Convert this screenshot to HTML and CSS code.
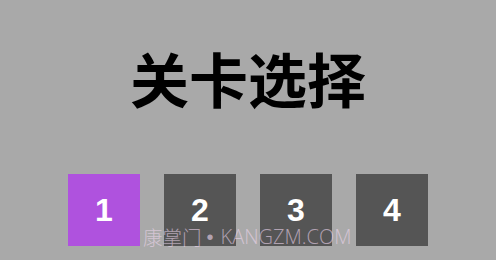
FILE: index.html
```html
<!DOCTYPE html>
<html lang="zh">
<head>
<meta charset="utf-8">
<link rel="stylesheet" href="styles.css">
</head>
<body>
<main class="screen">
  <h1 class="title">关卡选择</h1>
  <div class="levels">
    <div class="level active">1</div>
    <div class="level">2</div>
    <div class="level">3</div>
    <div class="level">4</div>
  </div>
  <div class="watermark"><span class="wm-cjk">康掌门</span><span class="wm-sep">•</span><span class="wm-latin">KANGZM.COM</span></div>
</main>
</body>
</html>
```
FILE: styles.css
```css
html, body {
  margin: 0;
  padding: 0;
}
body {
  background: #a9a9a9;
  width: 496px;
  height: 260px;
  overflow: hidden;
}
.screen {
  position: relative;
  width: 496px;
  height: 260px;
  display: flex;
  flex-direction: column;
  align-items: center;
}
.title {
  margin: 43px 0 0 0;
  font-family: "Noto Sans CJK SC", sans-serif;
  font-weight: 700;
  font-size: 59px;
  line-height: 70px;
  color: #000;
  letter-spacing: 0;
}
.levels {
  margin-top: 61px;
  display: flex;
  gap: 24px;
}
.level {
  width: 72px;
  height: 72px;
  background: #555555;
  color: #fff;
  font-family: "Liberation Sans", Arial, sans-serif;
  font-weight: 700;
  font-size: 32px;
  display: flex;
  align-items: center;
  justify-content: center;
}
.level.active {
  background: #af52de;
}
.watermark {
  position: absolute;
  left: 143px;
  top: 226px;
  display: flex;
  align-items: center;
  font-size: 19.5px;
  line-height: 22px;
  color: rgba(240, 215, 240, 0.6);
  white-space: nowrap;
}
.wm-cjk {
  font-family: "Noto Sans CJK SC", sans-serif;
  font-weight: 300;
}
.wm-sep {
  font-family: "Liberation Sans", sans-serif;
  font-size: 20px;
  margin: 0 7px 0 5px;
}
.wm-latin {
  font-family: "Open Sans", sans-serif;
  font-weight: 300;
  font-size: 20px;
}
```
